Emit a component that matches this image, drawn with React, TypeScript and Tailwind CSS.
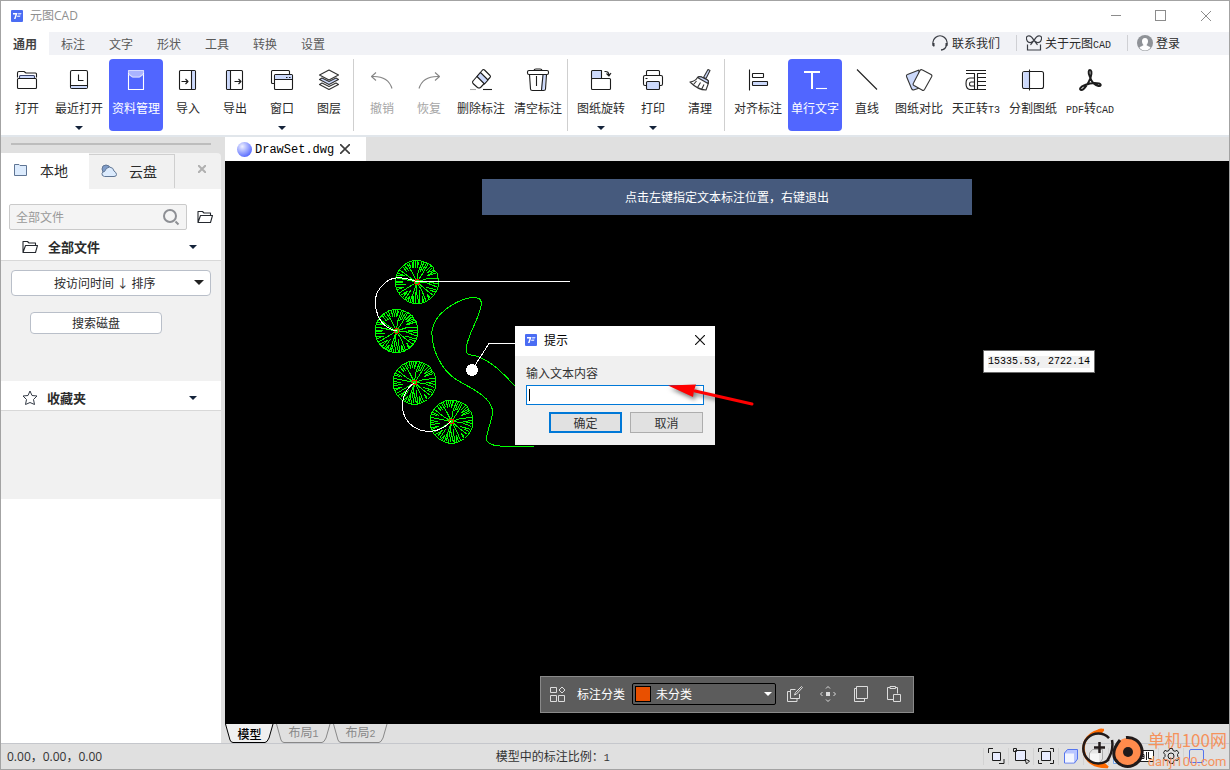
import { useState } from 'react';
import type { ReactNode } from 'react';

type Tool = {
  label: ReactNode;
  icon: ReactNode;
  wide?: boolean;
  active?: boolean;
  disabled?: boolean;
  menu?: boolean;
};

const PALE = '#ccd9fb';

function Latin({ children }: { children: ReactNode }) {
  return <span className="font-['Liberation_Mono',monospace] text-[10px]">{children}</span>;
}

function Icon({ children, color = '#1c1c1c' }: { children: ReactNode; color?: string }) {
  return (
    <svg width="24" height="24" viewBox="0 0 24 24" fill="none" stroke={color} strokeWidth="1.1" strokeLinejoin="round">
      {children}
    </svg>
  );
}

function Caret({ className = '' }: { className?: string }) {
  return (
    <svg width="8" height="4" viewBox="0 0 8 4" className={className}>
      <path d="M0 0h8L4 4z" fill="currentColor" />
    </svg>
  );
}

const fileTools: Tool[] = [
  {
    label: '打开',
    icon: (
      <Icon>
        <path d="M2.5 9.5V5a1.5 1.5 0 0 1 1.5-1.5h5l2 1.5h9.5a1 1 0 0 1 1 1v3.5" />
        <path d="M4.5 10V8.500q0-1 1-1h13q1 0 1 1V10" fill={PALE} stroke="#39436b" />
        <rect x="2.5" y="10.5" width="19" height="10" rx="1" fill="#fff" />
      </Icon>
    ),
  },
  {
    label: '最近打开',
    wide: true,
    menu: true,
    icon: (
      <Icon>
        <rect x="3.5" y="2.5" width="17" height="18" rx="1.5" />
        <path d="M4 17.5h16v2.500H4z" fill={PALE} stroke="none" />
        <path d="M3.5 17.5h17M11.500 6.500v6h5" />
      </Icon>
    ),
  },
  {
    label: '资料管理',
    wide: true,
    active: true,
    icon: (
      <Icon color="#fff">
        <path d="M4.5 2.500h15V6L15 9.500H9L4.500 6z" fill="#a9b3ff" stroke="none" />
        <path d="M4.500 5v16.500h15V5" />
        <path d="M4.500 5V2.500h15V5M4.500 6l4 3h7l4-3" stroke="#d5daff" />
      </Icon>
    ),
  },
  {
    label: '导入',
    icon: (
      <Icon>
        <rect x="3.5" y="2.5" width="16" height="19" rx="1" />
        <path d="M15.500 3h3.500v18h-3.500z" fill={PALE} stroke="none" />
        <path d="M15.500 2.500v19M5.500 13.500h6.500M9.500 11l2.500 2.500L9.500 16" />
      </Icon>
    ),
  },
  {
    label: '导出',
    icon: (
      <Icon>
        <rect x="3.5" y="2.5" width="16" height="19" rx="1" />
        <path d="M4 3h3.500v18H4z" fill={PALE} stroke="none" />
        <path d="M7.500 2.500v19M11.500 13.500H18M15.500 11l2.500 2.500L15.500 16" />
      </Icon>
    ),
  },
  {
    label: '窗口',
    menu: true,
    icon: (
      <Icon>
        <path d="M4 15.500H2.500q-1 0-1-1v-11q0-1 1-1h16q1 0 1 1V6" />
        <rect x="4.5" y="6.5" width="18" height="15" rx="1" fill="#fff" />
        <path d="M5 7h17v4.500H5z" fill={PALE} stroke="none" />
        <path d="M4.500 11.500h18M16 9.500h1.500M19 9.500h1.500" />
      </Icon>
    ),
  },
  {
    label: '图层',
    icon: (
      <Icon color="#333">
        <path d="M2.500 16.500l9.500 5 9.500-5-2.500-1.500-7 3.500-7-3.500z" fill="#fff" />
        <path d="M2.500 11.500l9.500 5 9.500-5-2.500-1.500-7 3.500-7-3.500z" fill={PALE} />
        <path d="M12 2l9.500 5-9.500 5-9.500-5z" fill="#fff" />
      </Icon>
    ),
  },
];

const editTools: Tool[] = [
  {
    label: '撤销',
    disabled: true,
    icon: (
      <Icon color="#858585">
        <path d="M6 4.500L1.500 8.500l4.500 4M1.500 8.500Q18 7.500 22 20.500" />
      </Icon>
    ),
  },
  {
    label: '恢复',
    disabled: true,
    icon: (
      <Icon color="#858585">
        <path d="M18 4.500l4.500 4-4.500 4M22.500 8.500Q6 7.500 2 20.500" />
      </Icon>
    ),
  },
  {
    label: '删除标注',
    wide: true,
    icon: (
      <Icon>
        <path d="M4 13l9.500-11q1-1 2 0l5.500 5.500q1 1 0 2l-9.500 10q-1.500 1-3 0l-4.500-4q-1-1.500 0-2.500z" fill="#fff" />
        <path d="M8 8.500l3.500-4 7.500 7.500-3.500 4z" fill={PALE} />
        <path d="M14 21.500h9" />
        <path d="M1 21.500h6" stroke="#aaa" />
      </Icon>
    ),
  },
  {
    label: '清空标注',
    wide: true,
    icon: (
      <Icon>
        <path d="M16.500 7h3.500l-1.500 15H15z" fill={PALE} stroke="none" />
        <path d="M3.500 6.500l1 14.500q0 1.500 2 1.500h11q2 0 2-1.500l1-14.500M17 7l-1.500 15M10.500 8v10" />
        <rect x="1.5" y="2.5" width="21" height="4" rx="1.5" fill="#fff" />
        <path d="M8 2.500q0-1.500 2-1.500h4q2 0 2 1.500" />
      </Icon>
    ),
  },
];

const pageTools: Tool[] = [
  {
    label: '图纸旋转',
    wide: true,
    menu: true,
    icon: (
      <Icon>
        <path d="M2.500 10.500v-7q0-1 1-1h9v8z" fill={PALE} />
        <rect x="2.5" y="10.5" width="19" height="11" rx="1" fill="#fff" />
        <path d="M15.500 3.500q4.500-.500 4.500 4M17.500 5.500l2.500 2.500 2-3" />
      </Icon>
    ),
  },
  {
    label: '打印',
    menu: true,
    icon: (
      <Icon>
        <path d="M5.500 7.500V3.500q0-1 1-1h11q1 0 1 1v4" />
        <rect x="2.5" y="7.5" width="19" height="10" rx="1.500" fill="#fff" />
        <rect x="5.500" y="13.500" width="13" height="8" rx="1" fill={PALE} />
        <path d="M4.500 10.500h2" />
      </Icon>
    ),
  },
  {
    label: '清理',
    icon: (
      <Icon color="#333">
        <path d="M20 1.500l2 1-4 8-2.500-1z" fill={PALE} />
        <path d="M9.500 9.500q2-1.500 4-.500l6 3q1.500 1 1 3l-2.500 7q-8 0-16-8 5-.500 7.500-4.500z" fill="#fff" />
        <path d="M9.500 9.500q2-1.500 4-.500l6 3q1.500 1 .500 3.500z" fill={PALE} />
        <path d="M5.500 16.500L8.500 13M9.500 19.500l3-5M13.500 21.500l2.500-5" />
      </Icon>
    ),
  },
];

const drawTools: Tool[] = [
  {
    label: '对齐标注',
    wide: true,
    icon: (
      <Icon>
        <path d="M3.500 1.500v21" />
        <rect x="6.5" y="5.5" width="11" height="4" rx=".5" />
        <rect x="6.5" y="13.5" width="15" height="4" rx=".5" fill={PALE} />
      </Icon>
    ),
  },
  {
    label: '单行文字',
    wide: true,
    active: true,
    icon: (
      <Icon color="#fff">
        <path d="M1 4h16M9 4v17" strokeWidth="2" />
        <path d="M13 20.500h11" />
      </Icon>
    ),
  },
  {
    label: '直线',
    icon: (
      <Icon>
        <path d="M2 1.500l20 20" />
      </Icon>
    ),
  },
  {
    label: '图纸对比',
    wide: true,
    icon: (
      <svg width="28" height="24" viewBox="0 0 28 24" fill="none" stroke="#333" strokeWidth="1.1" strokeLinejoin="round">
        <path d="M14 2L2.500 6.500q-1.500.500-1 2l5 12q.5 1.500 2 1.500l6-2z" fill={PALE} />
        <path d="M15 2.500q1-1.500 2.500-.500l8.500 4.500q1.500 1 .500 2.500l-7 12.500q-1 1.500-2.500.500l-8-4.500q-1.500-1-.500-2.500z" fill="#fff" />
      </svg>
    ),
  },
  {
    label: <>天正转<Latin>T3</Latin></>,
    wide: true,
    icon: (
      <Icon>
        <path d="M2 2.500h20M2 5.500h8.500v16M22 5.500h-8.500v16M13.500 9.500H22M13.500 13.500H22M13.500 17.500H22M10.500 10H6q-4 0-4 5.500T6 21.500h16M10.500 14H7q-1.500 0-1.500 2T7 18h3.500" />
      </Icon>
    ),
  },
  {
    label: '分割图纸',
    wide: true,
    icon: (
      <Icon>
        <rect x="1.5" y="3.5" width="21" height="17" rx="2" />
        <path d="M2.500 4h6v16h-6z" fill={PALE} stroke="none" />
        <path d="M8.500 1.500v21" />
      </Icon>
    ),
  },
  {
    label: <><Latin>PDF</Latin>转<Latin>CAD</Latin></>,
    wide: true,
    icon: (
      <Icon>
        <path
          d="M12 9C9.500 4 11 2 12 2s2.500 2 .500 8C10.500 15 6 22 3.500 22S1.500 19 7 17c5-2 10-2.500 14-1.500 3 1 1.500 3-.500 2.500-4-1-7-4-8.500-9z"
          strokeWidth="2"
        />
      </Icon>
    ),
  },
];

function ToolButton({ tool }: { tool: Tool }) {
  const color = tool.active ? 'bg-[#5166ff] text-white' : tool.disabled ? 'text-[#a5a5a5]' : 'text-[#2b2b2b]';
  return (
    <button
      disabled={tool.disabled}
      className={`flex h-[72px] shrink-0 flex-col items-center rounded-sm pt-[9px] whitespace-nowrap ${tool.wide ? 'w-[54px]' : 'w-11'} ${color}`}
    >
      {tool.icon}
      <span className="mt-2 leading-4">{tool.label}</span>
      {tool.menu && <Caret className="mt-2.5 text-[#14233a]" />}
    </button>
  );
}

function Divider() {
  return <div className="mr-[3px] -ml-px h-[72px] w-px shrink-0 bg-[#cfcfcf]" />;
}

function AppLogo() {
  return (
    <svg width="12" height="12" viewBox="0 0 12 12">
      <rect width="12" height="12" rx="1" fill="#4a6cf3" />
      <path d="M2 3H6.500L4.500 9H3l1.500-4.500H2z" fill="#fff" />
      <path d="M7.200 3h3.300L10 4.500H7zM6.500 5.500h3L9 7H6z" fill="#cdd8ff" />
    </svg>
  );
}

function CloseMark({ size, color, width = 1 }: { size: number; color: string; width?: number }) {
  return (
    <svg width={size} height={size} viewBox="0 0 10 10" stroke={color} strokeWidth={width}>
      <path d="M0 0l10 10M10 0L0 10" />
    </svg>
  );
}

function FolderOpen() {
  return (
    <svg width="16" height="14" viewBox="0 0 16 14" fill="none" stroke="#25292f" strokeWidth="1.1" strokeLinejoin="round">
      <path d="M1 12V1.500h4.500L7 3h6.500v2.500M1 12.500L3.500 5.500h12l-2 7z" />
    </svg>
  );
}

function TitleBar() {
  return (
    <header className="flex h-[31px] shrink-0 items-center bg-white pb-0.5 pl-2.5">
      <AppLogo />
      <h1 className="ml-[7px] flex-1 font-['Open_Sans','Noto_Sans_CJK_SC',sans-serif] text-[#8f8f8f]">元图CAD</h1>
      <button aria-label="最小化" className="flex h-full w-[45px] items-center justify-center">
        <span className="h-px w-2.5 bg-[#8c8c8c]" />
      </button>
      <button aria-label="最大化" className="flex h-full w-[45px] items-center justify-center">
        <span className="size-[11px] border border-[#8c8c8c]" />
      </button>
      <button aria-label="关闭" className="flex h-full w-[46px] items-center justify-center">
        <CloseMark size={10} color="#8c8c8c" />
      </button>
    </header>
  );
}

function MenuBar() {
  return (
    <nav className="flex h-[23px] shrink-0 items-center bg-[#f1f2f6] text-[#5a5a5a]">
      <button className="h-full w-12 bg-white font-bold text-[#444]">通用</button>
      {['标注', '文字', '形状', '工具', '转换', '设置'].map((name) => (
        <button key={name} className="h-full w-12">{name}</button>
      ))}
      <div className="ml-auto flex items-center pr-[49px] whitespace-nowrap text-[#2b2b2b]">
        <a href="#contact" className="flex items-center gap-1">
          <svg width="16" height="16" viewBox="0 0 16 16" fill="none" stroke="#3a3d44" strokeWidth="1.3">
            <path d="M2 11.500a7 7 0 1 1 12 0M14 11.500Q13 14.500 9 15" />
            <path d="M1.500 8v3M14.500 8v3" strokeWidth="2" />
          </svg>
          联系我们
        </a>
        <span className="mr-[9px] ml-4 h-4 w-px bg-[#cfd0d4]" />
        <a href="#about" className="flex items-center gap-[3px]">
          <svg width="16" height="16" viewBox="0 0 16 16" fill="none" stroke="#3a3d44" strokeWidth="1.2">
            <path d="M8 5.500Q5 0 2 1T1.500 6.500Q5 9 8 5.500zQ11 0 14 1t.500 5.500Q11 9 8 5.500zL4.500 10M8 5.500l3.500 4.500M1.500 9.500V15h13V9.500" />
          </svg>
          <span>关于元图<Latin>CAD</Latin></span>
        </a>
        <span className="mr-[9px] ml-4 h-4 w-px bg-[#cfd0d4]" />
        <a href="#login" className="flex items-center gap-[3px]">
          <svg width="16" height="16" viewBox="0 0 16 16">
            <circle cx="8" cy="8" r="8" fill="#8f9297" />
            <path d="M8 3c4 0 3.500 5.500 1.500 7 0 1 3.500 1 4 3Q8 18 2.500 13c.5-2 4-2 4-3C4.500 8.500 4 3 8 3z" fill="#fff" />
          </svg>
          登录
        </a>
      </div>
    </nav>
  );
}

function Ribbon() {
  return (
    <div className="flex h-20 shrink-0 items-center gap-[3px] bg-white pl-1">
      {fileTools.map((tool, i) => <ToolButton key={i} tool={tool} />)}
      <Divider />
      {editTools.map((tool, i) => <ToolButton key={i} tool={tool} />)}
      <Divider />
      {pageTools.map((tool, i) => <ToolButton key={i} tool={tool} />)}
      <Divider />
      {drawTools.map((tool, i) => <ToolButton key={i} tool={tool} />)}
    </div>
  );
}

function Sidebar() {
  return (
    <aside className="flex w-[220px] shrink-0 flex-col">
      <div className="h-4 shrink-0 bg-[#e0e0e0] px-2.5 pt-1.5">
        <div className="h-0.5 bg-[#bdbdbd]" />
      </div>
      <div className="flex h-9 shrink-0 items-center rounded-tr-sm bg-[#f1f1f1] text-sm text-[#2b2b2b]">
        <button className="flex h-full w-[88px] items-center gap-3 bg-white pb-0.5 pl-3">
          <svg width="15" height="14" viewBox="0 0 15 14" fill="#dcebfd" stroke="#5f7594">
            <path d="M1.500 1.500H6l1 1h6.500v10h-12z" />
          </svg>
          本地
        </button>
        <button className="flex h-[34px] w-[86px] items-center gap-3 border-t border-r border-[#cfcfcf] pb-0.5 pl-3">
          <svg width="16" height="14" viewBox="0 0 16 14" stroke="#5f7594">
            <circle cx="5" cy="5" r="4" fill="#7f9cc9" />
            <path d="M3.500 12.500Q.500 12 1 9.500q.500-2 2.500-2Q5 3.500 8.500 3q4 .500 4.500 4 2.500 1.500 2.500 3.500t-2.500 2z" fill="#dcebfd" />
          </svg>
          云盘
        </button>
        <button aria-label="关闭面板" className="mb-1 ml-[23px]">
          <CloseMark size={8} color="#b0b0b0" width={2.5} />
        </button>
      </div>

      <div className="bg-white pt-[15px] pl-2">
        <div className="flex items-center gap-2.5">
          <label className="flex h-[26px] w-[178px] items-center rounded-xs border border-[#cacaca] bg-[#f4f4f4] px-1.5">
            <input aria-label="搜索文件" placeholder="全部文件" className="min-w-0 flex-1 outline-none placeholder:text-[#999]" />
            <svg width="18" height="18" viewBox="0 0 18 18" fill="none" stroke="#8d8f94" strokeWidth="2">
              <circle cx="8" cy="8" r="6" />
              <path d="M13.500 13.500l3 3" />
            </svg>
          </label>
          <button aria-label="打开文件夹"><FolderOpen /></button>
        </div>
        <button className="mt-1 flex h-[26px] w-full items-center gap-2.5 pr-6 pl-[13px] text-[13px] font-bold text-[#2b2b2b]">
          <FolderOpen />
          全部文件
          <Caret className="ml-auto text-[#14233a]" />
        </button>
      </div>

      <div className="h-[121px] shrink-0 border-t border-[#d8d8d8] bg-[#f1f1f1] px-2.5 pt-[9px]">
        <div className="relative">
          <select aria-label="排序方式" className="h-[26px] w-full appearance-none rounded-sm border border-[#b9bfc9] bg-white pl-[42px] text-[#2b2b2b]">
            <option>按访问时间 ↓ 排序</option>
          </select>
          <svg width="10" height="5" viewBox="0 0 10 5" className="pointer-events-none absolute top-2.5 right-[7px]">
            <path d="M0 0h10L5 5z" fill="#222" />
          </svg>
        </div>
        <button className="mt-4 ml-[19px] h-[22px] w-[132px] rounded-sm border border-[#b9bfc9] bg-white text-[#2b2b2b]">搜索磁盘</button>
      </div>

      <button className="flex h-[29px] shrink-0 items-center gap-[9px] bg-white pt-1 pr-6 pl-[21px] text-[13px] font-bold text-[#2b2b2b]">
        <svg width="16" height="16" viewBox="0 0 16 16" fill="none" stroke="#333a45" strokeLinejoin="round">
          <path d="M8 1l2 4.500 5 .500-3.500 3.500 1 5L8 12.500 3.500 14.500l1-5L1 6l5-.500z" />
        </svg>
        收藏夹
        <Caret className="ml-auto text-[#14233a]" />
      </button>
      <div className="h-[89px] shrink-0 border-t border-[#d8d8d8] bg-[#f1f1f1]" />
      <div className="flex-1 bg-white" />
    </aside>
  );
}

// the crown: short folds and long branches hanging from the rim, open on the right
const TREE = [
  'M21-4L20-9L17-12L16-15L12-18L7-20L3-21.500L-3-21.500L-8-20L-13-17L-17-13L-20-8L-21.500-3L-21.500 3L-20 8L-17 13L-13 17L-8 20L-3 21.500L3 21.500L8 20L13 17L17 13L20 8L21.500 3L21-4',
  'M21-4L9-3L0 0M21-1L12 0L21 2M20 5L10 1L0 0M19 8L9 5M18 10L13 8M16 13L8 7L0 0M13 16L10 12L12 17',
  'M9 19L5 9L0 0M7 20L5 14L5 20.500M3 21L2 8M2 21L-1 9L0 0M-1 21L-2 10M-3 21L-4 14L-5 20',
  'M-7 20L-3 9L0 0M-9 19L-7 14L-11 18M-12 17L-6 8M-14 15L-9 9L-16 13M-18 11L-8 5L0 0',
  'M-20 8L-13 5L-20 6M-21 3L-11 2M-21 1L-14 0L-21-1M-20-4L-10-2L0 0M-20-7L-14-6M-19-9L-12-6M-17-12L-8-5L0 0',
  'M-14-15L-10-10M-13-17L-8-11M-10-18L-5-10L0 0M-8-19L-6-14M-5-20L-4-14L-3-21M-1-21L-2-14M1-21L0-14L2-20',
  'M5-20L1-9L0 0M7-20L3-10M9-18L5-11M11-18L6-9L0 0M14-16L9-11M15-14L10-9L17-12M18-11L11-7M19-9L10-6',
].join('');

const trees = [
  [417, 282],
  [396.5, 331],
  [414.5, 382.5],
  [451.5, 421.5],
];

function Drawing() {
  return (
    <svg className="absolute inset-0 size-full" fill="none" shapeRendering="crispEdges">
      <g transform="translate(-225 -161)">
        <path
          stroke="#00ff00"
          d="M515 386C500 370 491 361 475 355.500C465 355 465 352 467 344C471 328 481 315 481.500 303C481 298 476 297 471 297.500C454 301 434 314 432 331C431 350 442 369 454 378C467 387 489 394 492.500 410C493 422 485 432 487 441C491 447 500 446.500 534 446.500"
        />
        {trees.map(([x, y]) => (
          <g key={y} transform={`translate(${x} ${y})`}>
            <path d={TREE} stroke="#00ff00" />
            <circle r="2.5" stroke="#ff0000" />
          </g>
        ))}
        <path
          stroke="#fff"
          d="M570 281.500H417C400 276 391 276 383 285C374 293 374 305 378 316C382 325 390 330 397 331M472 370L489 343.500H515M414 383C401 392 400 408 406 419C415 433 437 437 451 421"
        />
        <circle cx="472" cy="370" r="6" fill="#fff" />
      </g>
    </svg>
  );
}

function PromptDialog({ onClose }: { onClose: () => void }) {
  return (
    <div role="dialog" aria-label="提示" className="absolute top-[165px] left-[290px] w-[200px] bg-[#f0f0f0] pb-3 text-[#333]">
      <div className="flex h-[30px] items-center bg-white px-2.5 pb-0.5">
        <AppLogo />
        <span className="ml-[7px] flex-1 text-black">提示</span>
        <button aria-label="关闭" onClick={onClose}><CloseMark size={10} color="#111" width={1.2} /></button>
      </div>
      <div className="px-[11px] pt-2">
        <label htmlFor="note" className="block leading-[18px]">输入文本内容</label>
        <div className="relative mt-[3px]">
          <input id="note" className="block h-5 w-full border border-[#0078d7] bg-white px-1 outline-none" />
          <span className="absolute top-1 left-[3px] h-3 w-px bg-black" />
        </div>
        <div className="mt-[7px] flex justify-end gap-2 pr-px">
          <button className="h-[21px] w-[73px] border-2 border-[#0078d7] bg-[#e1e1e1] leading-[17px]">确定</button>
          <button onClick={onClose} className="h-[21px] w-[73px] border border-[#adadad] bg-[#e1e1e1] leading-[19px]">取消</button>
        </div>
      </div>
    </div>
  );
}

function PointerArrow() {
  return (
    <svg width="96" height="34" viewBox="0 0 96 34" className="absolute top-[219px] left-[440px] drop-shadow-[2px_3px_2px_rgba(0,0,0,0.5)]">
      <path d="M30 11L87 24" stroke="#f00" strokeWidth="3" strokeLinecap="round" />
      <path d="M3 5.500L31 4.500L29 10.500L28 17z" fill="#f00" />
    </svg>
  );
}

const toolbarIcons = [
  {
    name: '编辑',
    d: 'M8.500 3.500h-5v9H12.500V8M3.500 5.500H.500v10h9.500v-3M7.500 9l1-2.500L14.500.500l1 1L9.500 8z',
  },
  {
    name: '移动',
    d: 'M6 6.500h4M6 7.500h4M6 8.500h4M6 9.500h4M6 2.500l2-2 2 2M6 13.500l2 2 2-2M2.500 6l-2 2 2 2M13.500 6l2 2-2 2',
  },
  {
    name: '复制',
    d: 'M3.500.500h11v12h-11zM3.500 2.500h-2v13h10v-3',
  },
  {
    name: '粘贴',
    d: 'M7 13.500H1.500v-12H4M9.500 1.500h2v6M4 .500h5.500v2H4zM7.500 8.500h7v7h-7z',
  },
];

function CategoryBar() {
  return (
    <div className="absolute bottom-[11px] left-1/2 flex h-[37px] w-[374px] -translate-x-1/2 items-center border border-[#8a8a8a] bg-[#5c5c5c] pb-px pl-[9px] text-white">
      <svg width="16" height="16" viewBox="0 0 16 16" fill="none" stroke="#ddd">
        <path d="M.500 1.500h6v5h-6zM.500 9.500h6v6h-6zM8.500 9.500h6v6h-6zM12 1l3 3-3 3-3-3z" />
      </svg>
      <label htmlFor="category" className="ml-[11px] w-[55px]">标注分类</label>
      <div className="relative">
        <select id="category" className="block h-[22px] w-36 appearance-none rounded-xs border border-black bg-[#5c5c5c] pl-[23px]">
          <option>未分类</option>
        </select>
        <span className="pointer-events-none absolute top-[3px] left-[3px] size-4 border border-black bg-[#e95000]" />
        <Caret className="pointer-events-none absolute top-[9px] right-1 text-white" />
      </div>
      <div className="ml-[11px] flex gap-[17px]">
        {toolbarIcons.map((icon) => (
          <button key={icon.name} aria-label={icon.name}>
            <svg width="16" height="16" viewBox="0 0 16 16" fill="none" stroke="#dcdcdc">
              <path d={icon.d} />
            </svg>
          </button>
        ))}
      </div>
    </div>
  );
}

function LayoutTab({ label, active }: { label: ReactNode; active?: boolean }) {
  const w = active ? 49 : 55;
  return (
    <button className={`relative leading-4 ${active ? 'w-[49px] font-medium text-black' : 'w-[55px] text-[#888]'}`}>
      <svg width={w} height="19" className="absolute inset-0" fill={active ? '#f0f0f0' : 'none'} stroke={active ? '#000' : '#888'}>
        <path d={`M.500 0L5 16Q6 18.500 8 18.500H${w - 9}Q${w - 7} 18.500 ${w - 5} 14L${w - 1} 0`} />
      </svg>
      <span className="relative">{label}</span>
    </button>
  );
}

function Workspace() {
  const [open, setOpen] = useState(true);
  return (
    <main className="flex min-w-0 flex-1 flex-col bg-[#e0e0e0] pl-1">
      <div className="flex h-6 shrink-0">
        <div className="flex w-[141px] items-center bg-white pl-3 text-black">
          <svg width="15" height="15" viewBox="0 0 15 15">
            <defs>
              <radialGradient id="ball" cx="35%" cy="30%" r="75%">
                <stop offset="0" stopColor="#eef0ff" />
                <stop offset="1" stopColor="#5468ff" />
              </radialGradient>
            </defs>
            <circle cx="7.5" cy="7.5" r="7.5" fill="url(#ball)" />
          </svg>
          <span className="ml-[3px] pt-px font-['Liberation_Mono',monospace] text-xs">DrawSet.dwg</span>
          <button aria-label="关闭文件" className="ml-1.5"><CloseMark size={10} color="#3c3c3c" width={1.6} /></button>
        </div>
      </div>
      <div className="relative min-h-0 flex-1 overflow-hidden bg-black">
        <Drawing />
        <p className="absolute top-[18px] left-1/2 h-9 w-[490px] -translate-x-1/2 bg-[#465a7d] text-center leading-9 text-white">
          点击左键指定文本标注位置，右键退出
        </p>
        {open && <PromptDialog onClose={() => setOpen(false)} />}
        <PointerArrow />
        <div className="absolute top-[189px] left-[758px] border border-[#6b6b6b] bg-white px-1 pt-[5px] pb-1 text-black">
          <p className="bg-[#f0f0f0] font-['Liberation_Mono',monospace] text-[10px] leading-3 whitespace-nowrap">15335.53, 2722.14</p>
        </div>
        <CategoryBar />
      </div>
      <div className="flex h-[19px] shrink-0 gap-0.5">
        <LayoutTab label="模型" active />
        <LayoutTab label={<>布局<Latin>1</Latin></>} />
        <LayoutTab label={<>布局<Latin>2</Latin></>} />
      </div>
    </main>
  );
}

const statusIcons = [
  { name: '选择', d: 'M.500 5V.500H5M16 11v4.500h-5', box: 'M4.500 4.500h8v8h-8z' },
  { name: '框选', d: 'M.500.500h3v3h-3zM12 11l1.500 5 3-3z', box: 'M2.500 2.500h10v10h-10z' },
  { name: '全图', d: 'M.500 4V.500H4M12 .500h3.500V4M15.500 12v3.500H12M4 15.500H.500V12', box: 'M3.500 3.500h9v9h-9z' },
];

function StatusButton({ name, children }: { name: string; children: ReactNode }) {
  return (
    <button aria-label={name} className="flex w-[25px] justify-center border-l border-[#d2d2d2]">
      <svg width="17" height="17" viewBox="0 0 17 17" fill="none" stroke="#1c1c1c">
        {children}
      </svg>
    </button>
  );
}

function StatusBar() {
  return (
    <footer className="flex h-[26px] shrink-0 items-center border-t border-[#c5c7cc] bg-[#e0e0e0] pl-1.5 text-[#333]">
      <p className="w-2/5 font-['Open_Sans','Noto_Sans_CJK_SC',sans-serif]">0.00，0.00，0.00</p>
      <p>模型中的标注比例：<Latin>1</Latin></p>
      <div className="ml-auto flex pr-[21px]">
        {statusIcons.map((icon) => (
          <StatusButton key={icon.name} name={icon.name}>
            <path d={icon.box} fill="#e8ecff" />
            <path d={icon.d} />
          </StatusButton>
        ))}
        <StatusButton name="实体">
          <path d="M1.500 5l3-3.500h10V11l-3 4h-10z" fill="#b9c6ff" stroke="#5575ee" />
          <path d="M2 5.500h9v9H2z" fill="#f2f5ff" stroke="none" />
        </StatusButton>
        <StatusButton name="线框">
          <path d="M1.500 5l3-3.500h10V11l-3 4h-10z" fill="#e6e6e6" stroke="#aaa" />
          <path d="M2 5.500h9v9H2z" fill="#f6f6f6" stroke="none" />
        </StatusButton>
        <StatusButton name="线宽">
          <path d="M.500.500h15v15H.500z" fill="#f2f5ff" stroke="#76a7e8" />
        </StatusButton>
        <StatusButton name="文字显示">
          <path d="M.500 2.500h15v11H.500z" fill="#fff" />
          <path d="M3 6.500h3v4H3V8.500h3M8.500 4v8M10.500 4v6.500h3" />
        </StatusButton>
        <StatusButton name="设置">
          <path d="M6.500.500h3l.500 2 2 .800 2-1 1.700 2.500-1.200 1.700.300 2 1.200 1.500-1.500 2.500-2.200-.500-1.800 1.200-.500 2.300h-3l-.800-2.300-2-1-2 .500L.500 10l1.500-1.500V6.500L.500 4.800 2 2.300l2 1 2-.800z" />
          <circle cx="8" cy="8" r="3" />
        </StatusButton>
        <StatusButton name="窗体">
          <rect x="1.5" y="1.5" width="14" height="13" rx="1.5" stroke="#5575ee" />
        </StatusButton>
      </div>
    </footer>
  );
}

function Watermark() {
  return (
    <div className="pointer-events-none absolute right-0.5 bottom-0 flex h-[41px] items-start gap-[3px] whitespace-nowrap text-[#f5925c]">
      <svg width="64" height="41" viewBox="0 0 64 41" fill="none">
        <path d="M23 2C8 3 1 13 3 24C5 34 14 39.500 27 39" stroke="#ff6a00" strokeWidth="2.5" />
        <path d="M14 4Q18-1 23 1L21 6zM12 35Q20 42 28 39L24 35z" fill="#ff6a00" />
        <path d="M28 10A15 15 0 1 0 28 31M31 12Q33 23 26 33" stroke="#211a1a" strokeWidth="2.5" />
        <path d="M18.500 14v11M13 19.500h11" stroke="#211a1a" strokeWidth="2.5" />
        <circle cx="47" cy="24" r="14" fill="#ff8b4c" />
        <path d="M45 9.500A14.500 14.500 0 1 1 34 31Q30 23 39 12" stroke="#211a1a" strokeWidth="3" />
        <circle cx="47" cy="24" r="5" fill="#211a1a" />
      </svg>
      <div className="pt-0.5">
        <p className="text-[17px] leading-5">单机100网</p>
        <p className="mt-1 font-[Roboto,sans-serif] text-[13px] leading-[15px]">danji100.com</p>
      </div>
    </div>
  );
}

export default function App() {
  return (
    <div className="relative flex h-screen flex-col overflow-hidden border border-[#a3a3a3] bg-[#e0e0e0] font-['Noto_Sans_CJK_SC',sans-serif] text-xs">
      <TitleBar />
      <MenuBar />
      <Ribbon />
      <div className="h-0.5 shrink-0 bg-[#e1e6eb]" />
      <div className="flex min-h-0 flex-1">
        <Sidebar />
        <Workspace />
      </div>
      <StatusBar />
      <Watermark />
    </div>
  );
}
